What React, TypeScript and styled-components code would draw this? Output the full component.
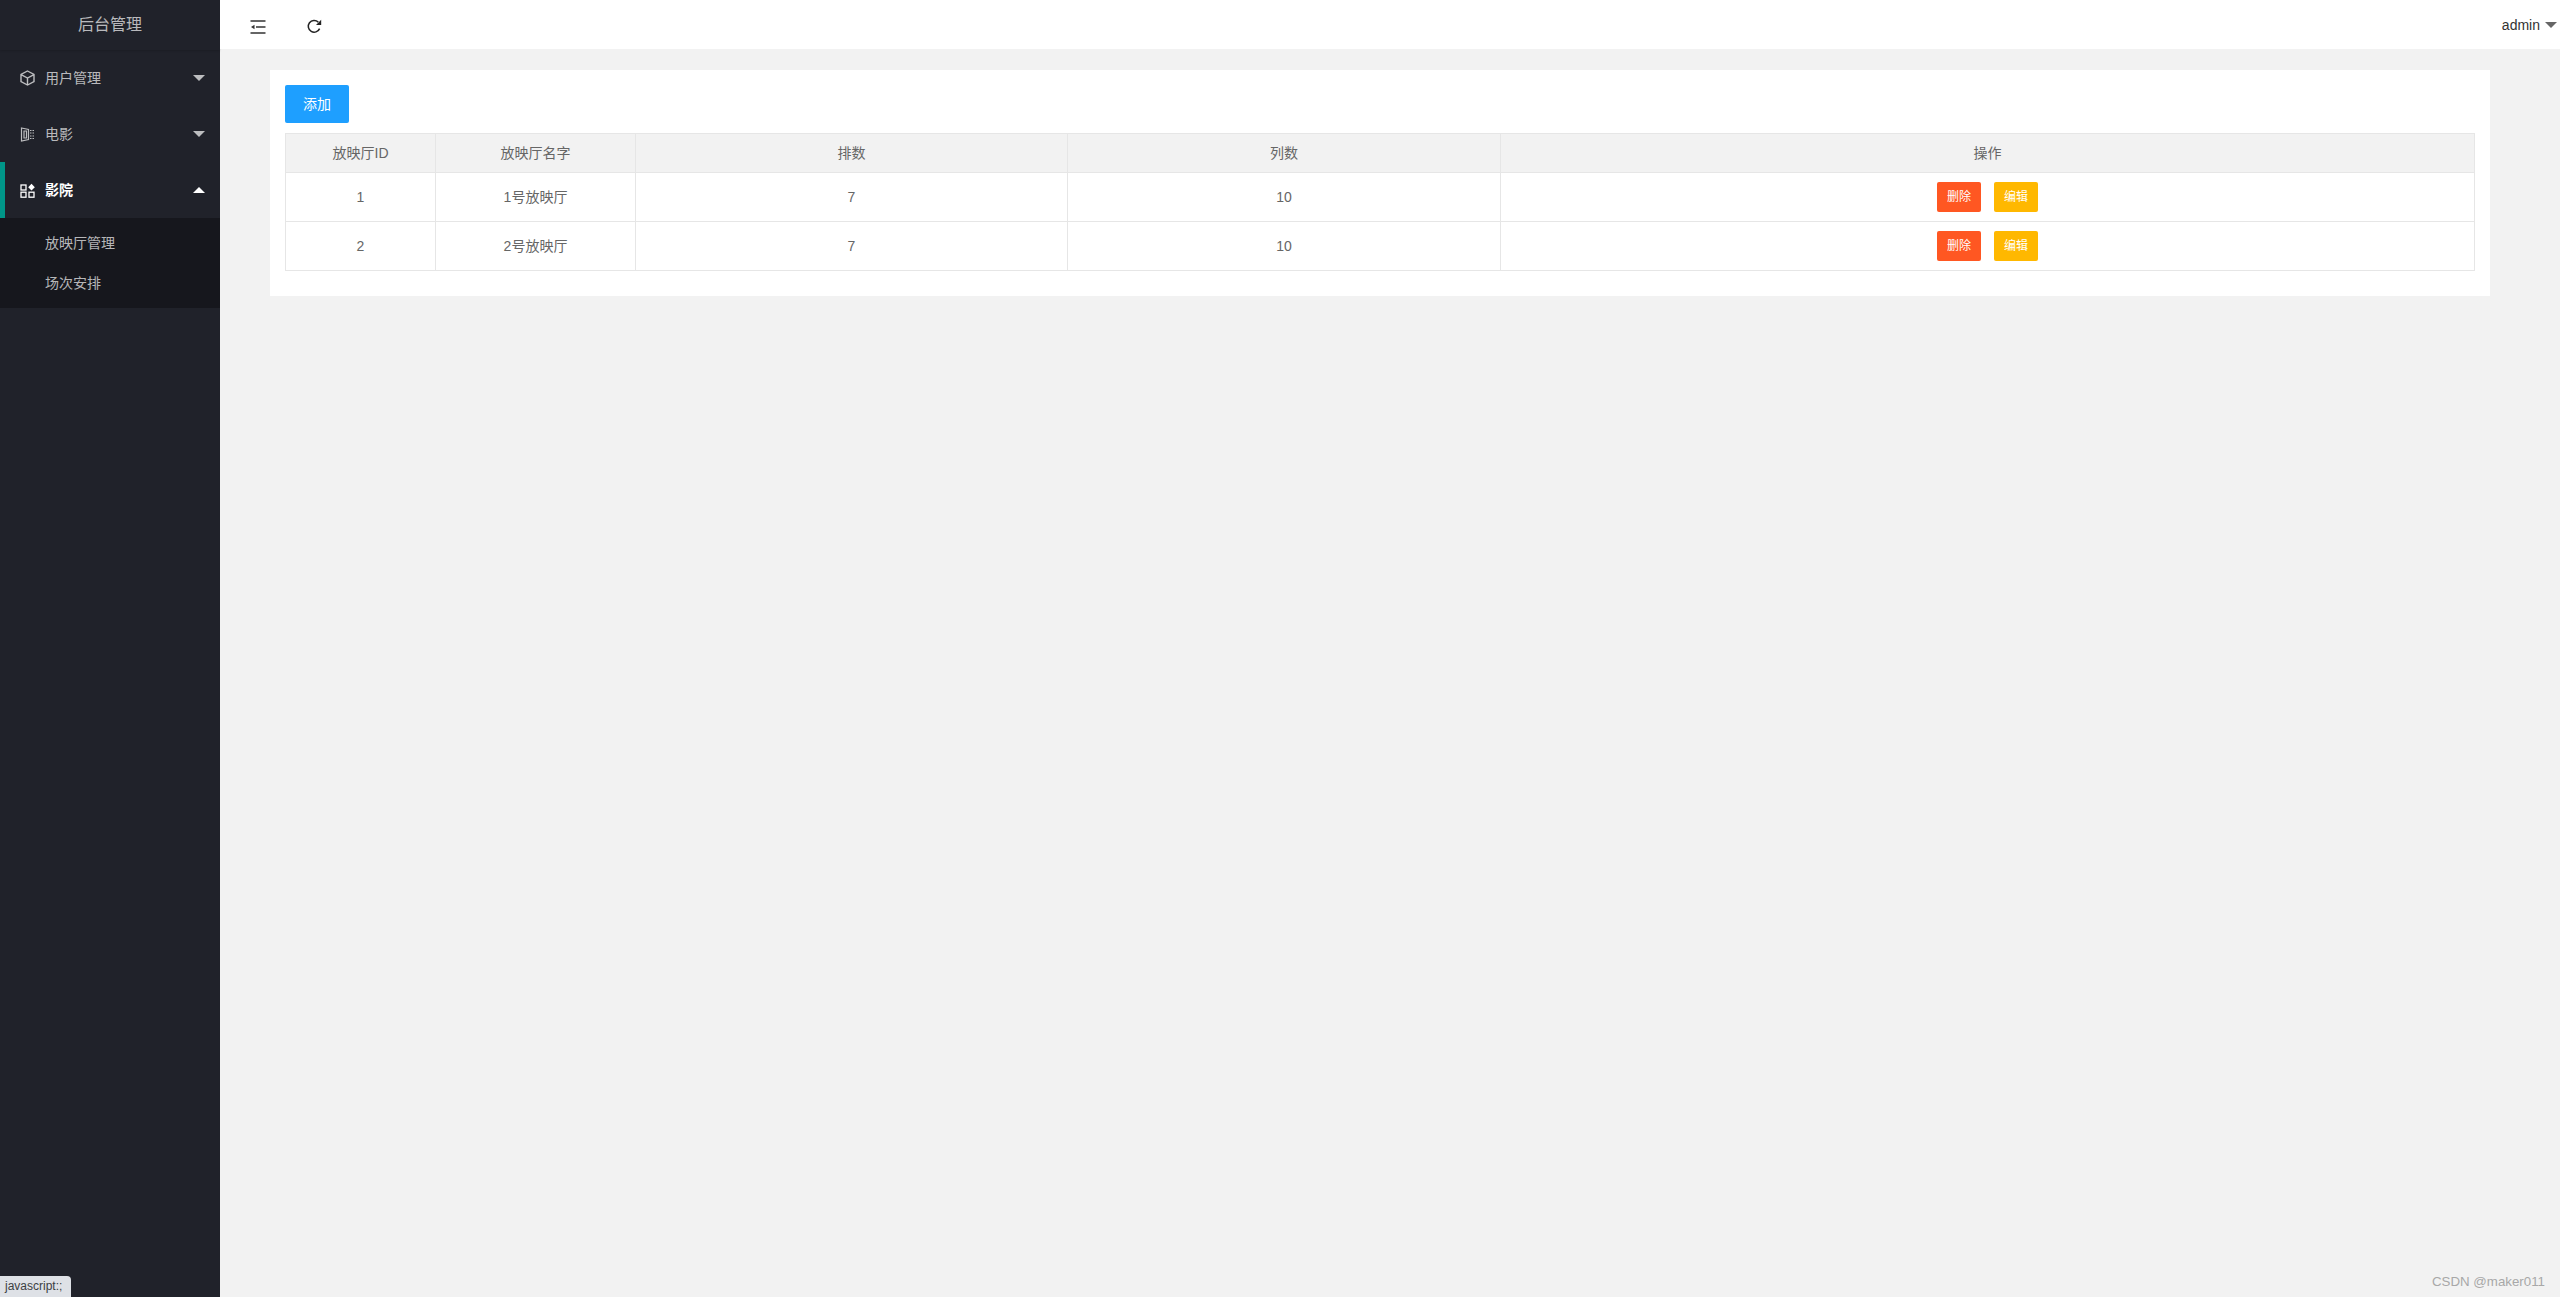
import React from 'react';
import styled, { createGlobalStyle } from 'styled-components';

const GlobalStyle = createGlobalStyle`
    html, body {
        margin: 0;
        padding: 0;
        height: 100%;
        background: #f2f2f2;
    }

    body {
        font-family: 'Liberation Sans', 'Noto Sans CJK SC', sans-serif;
        font-size: 14px;
        line-height: 20px;
        color: #666;
    }
`;

const Layout = styled.div`
    display: flex;
    width: 2560px;
    height: 1297px;
    overflow: hidden;
    position: relative;
`;

const Sidebar = styled.aside`
    flex: 0 0 220px;
    background: #20222a;
    color: rgba(255, 255, 255, 0.7);
`;

const Logo = styled.div`
    height: 50px;
    line-height: 49px;
    text-align: center;
    font-size: 16px;
    box-shadow: 0 1px 2px 0 rgba(0, 0, 0, 0.15);
`;

const NavItem = styled.div<{ $active?: boolean }>`
    height: 56px;
    display: flex;
    align-items: center;
    padding-left: 20px;
    padding-right: 15px;
    color: ${(p) => (p.$active ? '#fff' : 'rgba(255, 255, 255, 0.7)')};
    font-weight: ${(p) => (p.$active ? 700 : 400)};
    box-shadow: ${(p) => (p.$active ? 'inset 5px 0 0 #009688' : 'none')};

    & svg {
        flex: 0 0 15px;
        margin-right: 10px;
    }
`;

const NavLabel = styled.span`
    flex: 1;
`;

const Caret = styled.i<{ $up?: boolean; $color?: string }>`
    display: block;
    width: 0;
    height: 0;
    border-left: 6px solid transparent;
    border-right: 6px solid transparent;
    border-top: ${(p) => (p.$up ? '0' : `6px solid ${p.$color || 'rgba(255, 255, 255, 0.7)'}`)};
    border-bottom: ${(p) => (p.$up ? '6px solid #fff' : '0')};
`;

const SubMenu = styled.div`
    background: rgba(0, 0, 0, 0.3);
    padding: 5px 0;
`;

const SubItem = styled.div`
    height: 40px;
    line-height: 40px;
    padding-left: 45px;
`;

const Main = styled.main`
    flex: 1;
    min-width: 0;
`;

const Header = styled.header`
    height: 49px;
    background: #fff;
    display: flex;
    align-items: center;
    justify-content: space-between;
    padding: 0 3px 0 30px;
`;

const HeaderTools = styled.div`
    display: flex;
    align-items: center;
    gap: 41px;
    position: relative;
    top: 2px;
`;

const UserMenu = styled.div`
    display: flex;
    align-items: center;
    gap: 5px;
    color: #333;
`;

const Content = styled.section`
    padding: 21px 70px 0 50px;
`;

const Card = styled.div`
    background: #fff;
    padding: 15px 15px 25px;
`;

const Button = styled.button<{ $color: string; $small?: boolean }>`
    display: block;
    border: 0;
    border-radius: 2px;
    padding: 0;
    margin: 0;
    color: #fff;
    font-family: inherit;
    line-height: 20px;
    background: ${(p) => p.$color};
    font-size: ${(p) => (p.$small ? '12px' : '14px')};
    width: ${(p) => (p.$small ? '44px' : '64px')};
    height: ${(p) => (p.$small ? '30px' : '38px')};
`;

const Table = styled.table`
    width: 2189px;
    margin-top: 10px;
    border-collapse: collapse;
    table-layout: fixed;
`;

const Th = styled.th`
    height: 38px;
    padding: 0 15px;
    font-weight: 400;
    text-align: center;
    background: #f2f2f2;
    border: 1px solid #e6e6e6;
`;

const Td = styled.td`
    height: 48px;
    padding: 0 15px;
    text-align: center;
    border: 1px solid #e6e6e6;
`;

const Actions = styled.div`
    display: flex;
    justify-content: center;
    gap: 13px;
`;

const StatusBubble = styled.div`
    position: absolute;
    left: 0;
    bottom: 0;
    width: 71px;
    height: 21px;
    line-height: 21px;
    padding-left: 5px;
    box-sizing: border-box;
    background: #dee1e6;
    border-top-right-radius: 4px;
    font-size: 12px;
    color: #3c4043;
`;

const Watermark = styled.div`
    position: absolute;
    right: 15px;
    bottom: 5px;
    font-size: 13.3px;
    color: #a8a8a8;
`;

const CubeIcon = () => (
    <svg width='15' height='16' viewBox='0 0 15 16' fill='none' stroke='currentColor' strokeWidth='1.4'>
        <path d='M7.5 1 L14 4.5 V11.5 L7.5 15 L1 11.5 V4.5 Z' />
        <path d='M1.5 4.8 L7.5 8 L13.5 4.8 M7.5 8 V14.5' />
    </svg>
);

const FilmIcon = () => (
    <svg width='15' height='15' viewBox='0 0 15 15' fill='none' stroke='currentColor' strokeWidth='1.2'>
        <path d='M1.5 1 L8.5 2.5 V12.5 L1.5 14 Z' />
        <path d='M4 4 H6.5 V11 H4 Z' />
        <path d='M10 3.5 H14 M10 6 H14 M10 9 H14 M10 11.5 H14' strokeDasharray='1.5 1' />
    </svg>
);

const AppsIcon = () => (
    <svg width='15' height='15' viewBox='0 0 15 15' fill='none' stroke='currentColor' strokeWidth='1.3'>
        <rect x='1' y='2' width='5' height='5' />
        <rect x='1' y='9.2' width='5' height='5' />
        <rect x='9' y='9.2' width='5' height='5' />
        <path d='M11.5 0.8 L14.8 4.2 L11.5 7.6 L8.2 4.2 Z' fill='currentColor' stroke='none' />
    </svg>
);

const ShrinkIcon = () => (
    <svg width='16' height='14' viewBox='0 0 16 14' fill='none' stroke='#333' strokeWidth='1.3'>
        <path d='M0.5 1 H15.5 M0.5 13 H15.5 M6 7 H15.5' />
        <path d='M1 7 L4.5 4.8 V9.2 Z' fill='#333' stroke='none' />
    </svg>
);

const RefreshIcon = () => (
    <svg width='15' height='15' viewBox='0 0 15 15' fill='none' stroke='#222' strokeWidth='1.5'>
        <path d='M12.6 9.6 A5.9 5.9 0 1 1 11.3 3.1' />
        <path d='M14.2 0.8 V6 H9 Z' fill='#222' stroke='none' />
    </svg>
);

const columns = [150, 200, 432, 433, 974];

const rows = [
    { id: 1, name: '1号放映厅', rowCount: 7, colCount: 10 },
    { id: 2, name: '2号放映厅', rowCount: 7, colCount: 10 },
];

export default function App() {
    return (
        <Layout>
            <GlobalStyle />
            <Sidebar>
                <Logo>后台管理</Logo>
                <NavItem>
                    <CubeIcon />
                    <NavLabel>用户管理</NavLabel>
                    <Caret />
                </NavItem>
                <NavItem>
                    <FilmIcon />
                    <NavLabel>电影</NavLabel>
                    <Caret />
                </NavItem>
                <NavItem $active>
                    <AppsIcon />
                    <NavLabel>影院</NavLabel>
                    <Caret $up />
                </NavItem>
                <SubMenu>
                    <SubItem>放映厅管理</SubItem>
                    <SubItem>场次安排</SubItem>
                </SubMenu>
            </Sidebar>
            <Main>
                <Header>
                    <HeaderTools>
                        <ShrinkIcon />
                        <RefreshIcon />
                    </HeaderTools>
                    <UserMenu>
                        <span>admin</span>
                        <Caret $color='#666' />
                    </UserMenu>
                </Header>
                <Content>
                    <Card>
                        <Button $color='#1e9fff'>添加</Button>
                        <Table>
                            <colgroup>
                                {columns.map((w) => (
                                    <col key={w} width={w} />
                                ))}
                            </colgroup>
                            <thead>
                                <tr>
                                    <Th>放映厅ID</Th>
                                    <Th>放映厅名字</Th>
                                    <Th>排数</Th>
                                    <Th>列数</Th>
                                    <Th>操作</Th>
                                </tr>
                            </thead>
                            <tbody>
                                {rows.map((row) => (
                                    <tr key={row.id}>
                                        <Td>{row.id}</Td>
                                        <Td>{row.name}</Td>
                                        <Td>{row.rowCount}</Td>
                                        <Td>{row.colCount}</Td>
                                        <Td>
                                            <Actions>
                                                <Button $small $color='#ff5722'>删除</Button>
                                                <Button $small $color='#ffb800'>编辑</Button>
                                            </Actions>
                                        </Td>
                                    </tr>
                                ))}
                            </tbody>
                        </Table>
                    </Card>
                </Content>
            </Main>
            <StatusBubble>javascript:;</StatusBubble>
            <Watermark>CSDN @maker011</Watermark>
        </Layout>
    );
}
